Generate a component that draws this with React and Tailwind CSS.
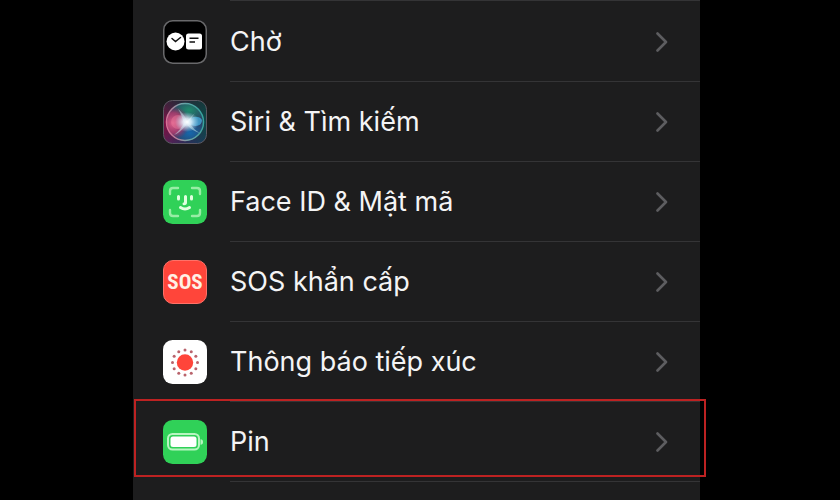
function StandbyIcon() {
  return (
    <svg viewBox="0 0 44 44" className="h-11 w-11 shrink-0" aria-hidden="true">
      <rect x="0.75" y="0.75" width="42.5" height="42.5" rx="9" fill="#000" stroke="#69696b" strokeWidth="1.5" />
      <circle cx="12.5" cy="21.5" r="9" fill="#fff" />
      <path d="M9 18.5l3.5 3 5-4" fill="none" stroke="#111" strokeWidth="1.5" strokeLinecap="round" />
      <rect x="23" y="13.5" width="16" height="16" rx="2.5" fill="#fff" />
      <path d="M26.5 18.3h9M26.5 22h5.5" fill="none" stroke="#111" strokeWidth="1.5" />
    </svg>
  )
}

function SiriIcon() {
  return (
    <svg viewBox="0 0 44 44" className="h-11 w-11 shrink-0" aria-hidden="true">
      <defs>
        <linearGradient id="siri-bg" x1="0" y1="0.6" x2="1" y2="0.4">
          <stop offset="0" stopColor="#860f45" />
          <stop offset="0.45" stopColor="#3a2748" />
          <stop offset="1" stopColor="#0b4a49" />
        </linearGradient>
        <linearGradient id="siri-shade" x1="0" y1="0" x2="0" y2="1">
          <stop offset="0" stopColor="#1f2a30" stopOpacity="0.6" />
          <stop offset="0.5" stopColor="#123034" stopOpacity="0" />
          <stop offset="1" stopColor="#123a75" stopOpacity="0.4" />
        </linearGradient>
        <linearGradient id="siri-ring" x1="0" y1="0.6" x2="1" y2="0.4">
          <stop offset="0" stopColor="#dd6d95" />
          <stop offset="0.5" stopColor="#72a3a8" />
          <stop offset="1" stopColor="#35a39d" />
        </linearGradient>
        <radialGradient id="siri-pink">
          <stop offset="0" stopColor="#e0608c" />
          <stop offset="0.6" stopColor="#b8396d" stopOpacity="0.8" />
          <stop offset="1" stopColor="#8f2457" stopOpacity="0" />
        </radialGradient>
        <radialGradient id="siri-green">
          <stop offset="0" stopColor="#1f8a6c" />
          <stop offset="1" stopColor="#1f8a6c" stopOpacity="0" />
        </radialGradient>
        <radialGradient id="siri-blue">
          <stop offset="0" stopColor="#1668ac" />
          <stop offset="1" stopColor="#1668ac" stopOpacity="0" />
        </radialGradient>
        <radialGradient id="siri-glow">
          <stop offset="0" stopColor="#fff" />
          <stop offset="0.35" stopColor="#e8f6ff" stopOpacity="0.85" />
          <stop offset="1" stopColor="#b7dcf2" stopOpacity="0" />
        </radialGradient>
        <clipPath id="siri-clip">
          <circle cx="22" cy="22" r="18" />
        </clipPath>
      </defs>
      <rect x="0.5" y="0.5" width="43" height="43" rx="9" fill="url(#siri-bg)" />
      <rect x="0.5" y="0.5" width="43" height="43" rx="9" fill="url(#siri-shade)" stroke="#5c5863" />
      <g clipPath="url(#siri-clip)">
        <rect width="44" height="44" fill="#2b4264" />
        <ellipse cx="26" cy="10" rx="18" ry="13" fill="url(#siri-green)" />
        <ellipse cx="27" cy="33" rx="18" ry="13" fill="url(#siri-blue)" />
        <circle cx="10" cy="23" r="17" fill="url(#siri-pink)" />
        <circle cx="15" cy="22" r="7" fill="#ea7d9d" opacity="0.45" />
        <path d="M23 22C28 16 36 15 39 20C39 27 30 28 23 22Z" fill="#48b6e8" opacity="0.7" />
        <path d="M15 9C20 13 23 18 24 21L32 13C29 17 27 20 26 22C29 27 33 31 37 33C30 31 26 28 24 24C20 29 16 33 11 35C16 31 19 27 21 23C19 18 18 13 15 9Z" fill="#c8eef2" opacity="0.5" />
        <ellipse cx="24" cy="22" rx="12" ry="10" fill="url(#siri-glow)" />
      </g>
      <circle cx="22" cy="22" r="18.5" fill="none" stroke="url(#siri-ring)" strokeWidth="1.5" />
    </svg>
  )
}

function FaceIdIcon() {
  return (
    <svg viewBox="0 0 44 44" className="h-11 w-11 shrink-0" aria-hidden="true">
      <rect width="44" height="44" rx="9.5" fill="#30d158" />
      <g fill="none" strokeLinecap="round" strokeLinejoin="round">
        <path
          d="M7 14v-3q0-3 3-3h5M29 8h5q3 0 3 3v3M37 30v3q0 3-3 3h-5M15 36h-5q-3 0-3-3v-3"
          stroke="#98eda5"
          strokeWidth="2.4"
        />
        <path
          d="M15.500 16.500v2.500M28.500 16.500v2.500M22.500 16.500v6q0 1.200-1.500 1.200M17.500 27.500q4.500 3 9 0"
          stroke="#e0ffdf"
          strokeWidth="3"
        />
      </g>
    </svg>
  )
}

function SosIcon() {
  return (
    <span className="grid h-11 w-11 shrink-0 place-items-center rounded-[10px] border border-[#ff7168] bg-[#ff453a] font-['Liberation_Sans_Narrow','Roboto_Condensed','Open_Sans_Condensed',Roboto,sans-serif] text-[21px] leading-none font-bold text-[#fff1e5]">
      SOS
    </span>
  )
}

function ExposureIcon() {
  const dots = Array.from({ length: 12 }, (_, i) => (i * Math.PI) / 6)

  return (
    <svg viewBox="0 0 44 44" className="h-11 w-11 shrink-0" aria-hidden="true">
      <rect width="44" height="44" rx="9.5" fill="#fff" />
      <circle cx="22" cy="22.500" r="8.200" fill="#ff453a" />
      {dots.map((a) => (
        <circle key={a} cx={22 + 12.5 * Math.cos(a)} cy={22.5 + 12.5 * Math.sin(a)} r="1.500" fill="#b9636c" />
      ))}
    </svg>
  )
}

function BatteryIcon() {
  return (
    <svg viewBox="0 0 44 44" className="h-11 w-11 shrink-0" aria-hidden="true">
      <rect width="44" height="44" rx="9.5" fill="#30d158" />
      <rect x="5" y="14" width="31" height="15.500" rx="4.500" fill="none" stroke="#b8f5c1" strokeWidth="2" />
      <rect x="7.500" y="16.500" width="26" height="10.500" rx="2.500" fill="#fff" />
      <path d="M37.500 19.300q2.500 0 2.500 2.700t-2.500 2.700z" fill="#b8f5c1" />
    </svg>
  )
}

const ROWS = [
  { label: 'Chờ', Icon: StandbyIcon },
  { label: 'Siri & Tìm kiếm', Icon: SiriIcon },
  { label: 'Face ID & Mật mã', Icon: FaceIdIcon },
  { label: 'SOS khẩn cấp', Icon: SosIcon },
  { label: 'Thông báo tiếp xúc', Icon: ExposureIcon },
  { label: 'Pin', Icon: BatteryIcon, highlighted: true },
]

function SettingsRow({ label, Icon, highlighted }) {
  return (
    <li className="relative">
      <button type="button" className="flex h-20 w-full items-center gap-[23px] pl-[30px] text-left">
        <Icon />
        <span className="flex h-full min-w-0 flex-1 items-center justify-between border-b border-[#343436] pr-8">
          <span className="text-[27px] leading-9 whitespace-nowrap">{label}</span>
          <svg viewBox="0 0 12 20" className="h-5 w-3 shrink-0" aria-hidden="true">
            <path d="M1.500 1.500L10 10l-8.500 8.500" fill="none" stroke="#5d5d60" strokeWidth="2.600" strokeLinecap="round" strokeLinejoin="round" />
          </svg>
        </span>
      </button>
      {highlighted && (
        <div className="pointer-events-none absolute -top-[3px] -right-[6px] bottom-[5px] left-px border-2 border-[#bd2222]" />
      )}
    </li>
  )
}

export default function App() {
  return (
    <div className="flex min-h-screen bg-black pr-[140px] pl-[133px]">
      <main className="flex-1 bg-[#1d1d1e] font-[Inter,'Liberation_Sans',sans-serif] text-[#f4f4f5]">
        <div className="ml-[97px] border-t border-[#343436]" />
        <ul className="pt-px">
          {ROWS.map((row) => (
            <SettingsRow key={row.label} {...row} />
          ))}
        </ul>
      </main>
    </div>
  )
}
